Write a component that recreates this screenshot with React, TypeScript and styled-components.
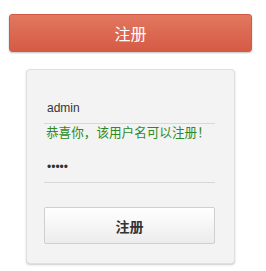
import styled, { createGlobalStyle } from 'styled-components';

const GlobalStyle = createGlobalStyle`
  html, body {
    margin: 0;
    padding: 0;
    background: #ffffff;
  }
  body {
    font-family: "Liberation Sans", "Noto Sans CJK SC", sans-serif;
  }
`;

const Page = styled.div`
  width: 266px;
  height: 271px;
  padding: 14px 14px 0 9px;
  box-sizing: border-box;
`;

const TopButton = styled.button`
  display: block;
  width: 243px;
  height: 38px;
  border: 1px solid #cf5a45;
  border-radius: 3px;
  background: linear-gradient(#e2775f, #d65b45);
  box-shadow: 0 1px 2px rgba(0, 0, 0, 0.25);
  color: #fff;
  font-size: 16px;
  font-family: "Noto Sans CJK SC", sans-serif;
  padding: 0;
`;

const Card = styled.div`
  width: 209px;
  margin: 17px 0 0 17px;
  box-sizing: border-box;
  padding: 22px 19px 19px 17px;
  background: #f3f3f3;
  border: 1px solid #e0e0e0;
  border-radius: 4px;
  box-shadow: 0 1px 2px rgba(0, 0, 0, 0.2);
`;

const Field = styled.input`
  display: block;
  width: 100%;
  height: 32px;
  box-sizing: border-box;
  border: none;
  border-bottom: 1px solid #d8d8d8;
  background: transparent;
  padding: 0 0 0 3px;
  font-size: 12px;
  color: #333;
  font-family: "Liberation Sans", "Noto Sans CJK SC", sans-serif;
  outline: none;
`;

const Message = styled.div<{ $ok: boolean }>`
  font-size: 12.6px;
  line-height: 16px;
  padding-left: 2px;
  margin-bottom: 11px;
  white-space: nowrap;
  color: ${({ $ok }) => ($ok ? '#2f8a22' : '#d33')};
  font-family: "Noto Sans CJK SC", sans-serif;
`;

const SubmitButton = styled.button`
  display: block;
  width: 100%;
  height: 37px;
  margin-top: 24px;
  border: 1px solid #cfcfcf;
  border-radius: 2px;
  background: linear-gradient(#ffffff, #ececec);
  color: #333;
  font-size: 14px;
  font-weight: bold;
  font-family: "Noto Sans CJK SC", sans-serif;
  padding: 0;
`;

const App = () => {
  return (
    <>
      <GlobalStyle />
      <Page>
        <TopButton>注册</TopButton>
        <Card>
          <Field defaultValue="admin" />
          <Message $ok>恭喜你，该用户名可以注册！</Message>
          <Field type="password" defaultValue="admin" />
          <SubmitButton>注册</SubmitButton>
        </Card>
      </Page>
    </>
  );
};

export default App;
